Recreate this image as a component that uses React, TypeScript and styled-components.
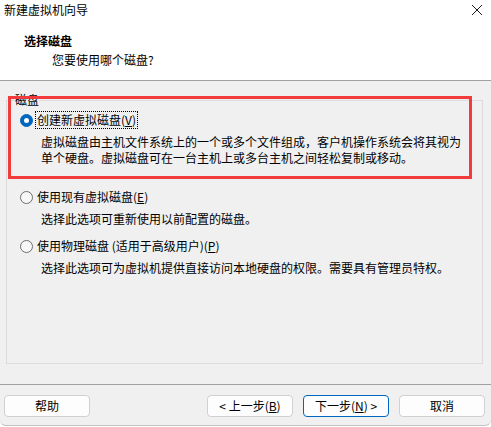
import React from "react";
import styled, { createGlobalStyle } from "styled-components";

const Global = createGlobalStyle`
  html, body { margin: 0; padding: 0; background: #ffffff; }
  body { font-family: "Noto Sans CJK SC", "Noto Sans", sans-serif; font-size: 12px; color: #000; }
  * { box-sizing: border-box; }
`;

const Window = styled.div`
  position: relative;
  width: 491px;
  height: 426px;
  display: flex;
  flex-direction: column;
  background: #f0f0f0;
  border-bottom: 1px solid #c2c2c2;
  border-radius: 0 0 6px 6px;
  overflow: hidden;
`;

const Header = styled.div`
  height: 81px;
  background: #ffffff;
  border-bottom: 1px solid #a0a0a0;
  display: flex;
  flex-direction: column;
`;

const TitleBar = styled.div`
  height: 22px;
  display: flex;
  align-items: center;
  justify-content: space-between;
  padding: 0 8px 2px 4px;
  line-height: 16px;
`;

const CloseBtn = styled.span`
  display: flex;
  width: 12px;
  height: 12px;
`;

const HeadTitle = styled.div`
  margin: 10px 0 0 24px;
  font-weight: bold;
  line-height: 18px;
`;

const HeadSub = styled.div`
  margin: 1px 0 0 52px;
  line-height: 18px;
`;

const Body = styled.div`
  flex: 1;
  padding: 11px 8px 0 6px;
`;

const Group = styled.fieldset`
  margin: 0;
  padding: 3px 0 0 13px;
  height: 272px;
  border: 1px solid #dcdcdc;
  border-radius: 0;
  min-width: 0;
`;

const Legend = styled.legend`
  margin-left: -5px;
  padding: 0;
  line-height: 16px;
`;

const OptionRow = styled.div<{ $top: number }>`
  display: flex;
  align-items: center;
  height: 18px;
  margin-top: ${(p) => p.$top}px;
  gap: 3px;
`;

const Radio = styled.span<{ $checked?: boolean }>`
  width: 13px;
  height: 13px;
  border-radius: 50%;
  flex: none;
  display: flex;
  align-items: center;
  justify-content: center;
  background: ${(p) => (p.$checked ? "#0067c0" : "#f7f7f7")};
  border: 1px solid ${(p) => (p.$checked ? "#0067c0" : "#6e6e6e")};
  &::after {
    content: "";
    display: ${(p) => (p.$checked ? "block" : "none")};
    width: 5px;
    height: 5px;
    border-radius: 50%;
    background: #ffffff;
  }
`;

const Label = styled.span<{ $focus?: boolean }>`
  line-height: 16px;
  padding: 0 1px;
  border: 1px dotted ${(p) => (p.$focus ? "#000" : "transparent")};
  margin-left: -1px;
  white-space: nowrap;
`;

const Desc = styled.div`
  margin: 5px 0 0 21px;
  line-height: 16px;
  white-space: pre-line;
`;

const Key = styled.span`
  text-decoration: underline;
  text-underline-offset: 1px;
`;

const Footer = styled.div`
  height: 41px;
  border-top: 1px solid #a0a0a0;
  display: flex;
  align-items: flex-start;
  padding: 10px 6px 0 4px;
`;

const Button = styled.button<{ $primary?: boolean }>`
  width: 86px;
  height: 22px;
  padding: 0;
  font-family: inherit;
  font-size: 12px;
  line-height: 16px;
  color: #000;
  background: #fdfdfd;
  border: 1px solid ${(p) => (p.$primary ? "#0067c0" : "#d0d0d0")};
  border-radius: 4px;
`;

const Spacer = styled.div`
  flex: 1;
`;

const ButtonGroup = styled.div`
  display: flex;
  gap: 10px;
`;

const Highlight = styled.div`
  position: absolute;
  left: 8px;
  top: 96px;
  width: 464px;
  height: 83px;
  border: 3px solid #f23b3b;
  pointer-events: none;
`;

export default function App() {
  return (
    <>
      <Global />
      <Window>
        <Header>
          <TitleBar>
            <span>新建虚拟机向导</span>
            <CloseBtn>
              <svg width="12" height="12" viewBox="0 0 12 12">
                <path d="M1 1 L11 11 M11 1 L1 11" stroke="#1a1a1a" strokeWidth="1" />
              </svg>
            </CloseBtn>
          </TitleBar>
          <HeadTitle>选择磁盘</HeadTitle>
          <HeadSub>您要使用哪个磁盘?</HeadSub>
        </Header>
        <Body>
          <Group>
            <Legend>磁盘</Legend>
            <OptionRow $top={0}>
              <Radio $checked />
              <Label $focus>
                创建新虚拟磁盘(<Key>V</Key>)
              </Label>
            </OptionRow>
            <Desc>
              {"虚拟磁盘由主机文件系统上的一个或多个文件组成，客户机操作系统会将其视为\n单个硬盘。虚拟磁盘可在一台主机上或多台主机之间轻松复制或移动。"}
            </Desc>
            <OptionRow $top={22}>
              <Radio />
              <Label>
                使用现有虚拟磁盘(<Key>E</Key>)
              </Label>
            </OptionRow>
            <Desc>选择此选项可重新使用以前配置的磁盘。</Desc>
            <OptionRow $top={10}>
              <Radio />
              <Label>
                使用物理磁盘 (适用于高级用户)(<Key>P</Key>)
              </Label>
            </OptionRow>
            <Desc>选择此选项可为虚拟机提供直接访问本地硬盘的权限。需要具有管理员特权。</Desc>
          </Group>
        </Body>
        <Footer>
          <Button>帮助</Button>
          <Spacer />
          <ButtonGroup>
            <Button>
              &lt; 上一步(<Key>B</Key>)
            </Button>
            <Button $primary>
              下一步(<Key>N</Key>) &gt;
            </Button>
            <Button>取消</Button>
          </ButtonGroup>
        </Footer>
        <Highlight />
      </Window>
    </>
  );
}
